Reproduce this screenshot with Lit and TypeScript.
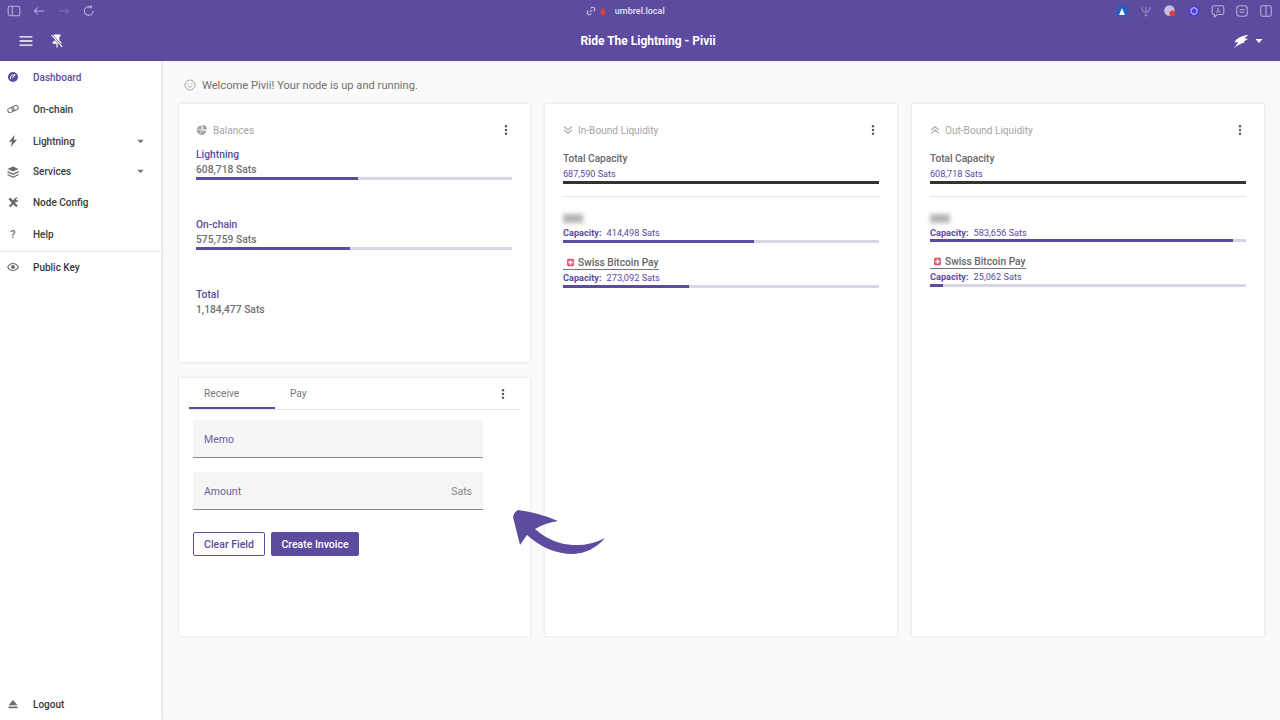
import { LitElement, html, css, svg } from 'lit';
import { customElement } from 'lit/decorators.js';

const ICONS = {
  dashboard: svg`<circle cx="12" cy="12" r="10" fill="currentColor"/><path d="M7.5 15.5a5.5 5.5 0 0 1 8-7M16 7l-4.5 6.5" fill="none" stroke="#fff" stroke-width="2" stroke-linecap="round"/>`,
  link: svg`<g fill="none" stroke="currentColor" stroke-width="2" transform="rotate(-25 12 12)"><rect x="1" y="7.5" width="13" height="9" rx="4.5"/><rect x="10" y="7.5" width="13" height="9" rx="4.5"/></g>`,
  bolt: svg`<path d="M15 0 4 13.500h6L7.500 24 20 9.500h-6.500z" fill="currentColor"/>`,
  layers: svg`<path d="M12 1 1 6l11 5 11-5zM1 10l11 5 11-5v3l-11 5L1 13zM1 16l11 5 11-5v2.500L12 23.500 1 18.500z" fill="currentColor"/>`,
  tools: svg`<path d="M3 6.500 6.500 3l5.500 5.500 5-5.200c1.600-.8 3.300-.4 4.200.4l-3.400 3.300 1 1.600 1.700.6 1.700-1.900c.3 2-.3 3.800-2 4.500-1 .4-1.800.3-2.600.1l-1.700 1.800 5.600 6-3 3-6-5.800-5.700 5.700-3.100-3.100 5.800-5.600z" fill="currentColor"/>`,
  eye: svg`<path d="M1.500 12C4 7 8 5 12 5s8 2 10.500 7C20 17 16 19 12 19S4 17 1.500 12z" fill="none" stroke="currentColor" stroke-width="2.400"/><circle cx="12" cy="12" r="3.800" fill="currentColor"/>`,
  eject: svg`<path d="M12 4 3 14.500h18zM3 17h18v3.500H3z" fill="currentColor"/>`,
  caret: svg`<path d="M5 8h14l-7 8z" fill="currentColor"/>`,
  smile: svg`<g fill="none" stroke="currentColor" stroke-width="1.500"><circle cx="12" cy="12" r="10"/><path d="M7.500 13.500c1.500 3.500 7.500 3.500 9 0M7 10h3M14 10h3"/></g>`,
  pie: svg`<path d="M11 3a9.500 9.500 0 1 0 9.500 10.500H11z" fill="currentColor"/><path d="M13.500 2a9 9 0 0 1 8.500 9h-8.500z" fill="currentColor"/><path d="M3 11h7M8 20l3-7" stroke="#fff" stroke-width="1.300"/>`,
  down: svg`<path d="m3 4 9 8 9-8M3 12l9 8 9-8" fill="none" stroke="currentColor" stroke-width="2.600"/>`,
  up: svg`<path d="m3 12 9-8 9 8M3 20l9-8 9 8" fill="none" stroke="currentColor" stroke-width="2.600"/>`,
  kebab: svg`<g fill="currentColor"><circle cx="12" cy="4.500" r="2.400"/><circle cx="12" cy="12" r="2.400"/><circle cx="12" cy="19.500" r="2.400"/></g>`,
  swiss: svg`<rect x="3" y="2" width="18" height="20" rx="3" fill="#e4526f"/><path d="M10 6h4v4h4v4h-4v4h-4v-4H6v-4h4z" fill="#fff"/>`,
};

function icon(name: keyof typeof ICONS, size: number) {
  return html`<svg class="icon" width=${size} height=${size} viewBox="0 0 24 24">${ICONS[name]}</svg>`;
}

@customElement('app-root')
export class AppRoot extends LitElement {
  static styles = css`
    :host {
      display: block;
      position: relative;
      width: 1280px;
      height: 720px;
      overflow: hidden;
      background: #fafafa;
      font-family: Roboto, 'Liberation Sans', sans-serif;
      font-size: 10.5px;
      color: #5f5f5f;
    }
    .icon { display: block; flex: none; }
    .header { height: 61px; background: #5c4b9f; color: #fff; display: flex; flex-direction: column; }
    .browser { height: 22px; display: grid; grid-template-columns: 1fr auto 1fr; align-items: center; padding: 0 7px; }
    .browser-left { display: flex; gap: 11px; align-items: center; color: #b8b0d8; }
    .browser-left svg { width: 14px; height: 14px; }
    .url { display: flex; align-items: center; gap: 3px; font-size: 9px; font-weight: 500; color: #e4e0f2; margin-right: 29.5px; }
    .url span { margin-left: 5px; }
    .browser-right { display: flex; justify-content: flex-end; gap: 10px; color: #b8b0d8; }
    .browser-right svg { width: 14px; height: 14px; }
    .toolbar { flex: 1; display: grid; grid-template-columns: 161px 974px 1fr; align-items: center; padding-bottom: 1px; }
    .toolbar-left { display: flex; align-items: center; gap: 17px; padding-left: 19px; }
    .title { text-align: center; font-size: 12px; font-weight: 700; }
    .toolbar-right { display: flex; align-items: center; justify-content: flex-end; gap: 4px; color: #fff; padding-right: 15px; }

    .body { display: flex; height: 659px; }
    .side {
      width: 161px;
      flex: none;
      background: #fff;
      box-shadow: 1px 0 3px rgba(0, 0, 0, 0.12);
      display: flex;
      flex-direction: column;
      color: #3a3a3a;
      font-size: 10px;
      font-weight: 500;
      z-index: 1;
    }
    .item { height: 32px; display: flex; align-items: center; padding-left: 7px; gap: 14px; }
    .item.short { height: 29px; }
    .item.key { height: 30px; }
    .item .ico { width: 12px; color: #6a6a6a; display: flex; justify-content: center; font-size: 11px; }
    .item.active { color: #5c4b9f; }
    .item.active .ico { color: #5c4b9f; }
    .item .caret { margin-left: auto; margin-right: 15px; color: #777; }
    .rule { border-top: 1px solid #e6e6e6; margin-top: 1px; }
    .item.logout { margin-top: auto; }

    .main { flex: 1; padding: 15px 16px 0 18px; }
    .welcome { height: 18px; display: flex; align-items: center; gap: 6px; margin: 0 0 10px 5px; font-size: 11.15px; color: #707070; }
    .welcome svg { color: #888; }
    .grid { display: grid; grid-template-columns: 351px 352px 352px; column-gap: 15px; height: 532px; }
    .col { display: flex; flex-direction: column; gap: 16px; }
    .card { background: #fff; box-shadow: 0 0 3px rgba(0, 0, 0, 0.12); }
    .card-head { display: flex; align-items: center; height: 16px; margin-top: 18px; gap: 5px; color: #a5a5a5; font-size: 10.1px; }
    .card-head span { flex: 1; }
    .card-head .kebab { color: #555; }

    .balances { height: 258px; padding: 0 18px 0 17px; font-size: 10.3px; }
    .balances .list { margin-top: 9px; }
    .balance { height: 70px; }
    .balance b { display: block; font-weight: 500; color: #5c4b9f; line-height: 15px; }
    .balance .sats { font-weight: 500; line-height: 15px; color: #707070; }
    .bar { height: 3px; background: #d9d6e6; }
    .bar i { display: block; height: 100%; background: #5c4b9f; }
    .bar.dark { background: #333; }

    .tabs-card { flex: 1; padding: 0 10px; }
    .tabs { display: flex; align-items: stretch; height: 31px; border-bottom: 1px solid #e4e4e4; font-size: 10.2px; }
    .tab { width: 86px; box-sizing: border-box; padding-left: 15px; display: flex; align-items: center; color: #777; }
    .tab.on { border-bottom: 2px solid #5c4b9f; height: 31px; padding-top: 2px; }
    .tab.pay { width: 46px; }
    .tabs .kebab { margin-left: auto; margin-right: 11px; align-self: center; color: #555; }
    .form { padding: 10px 0 0 4px; width: 290px; display: flex; flex-direction: column; gap: 14px; }
    .field {
      height: 37px;
      box-sizing: content-box;
      background: #f6f6f6;
      border-bottom: 1px solid #8a8a8a;
      display: flex;
      align-items: center;
      justify-content: space-between;
      padding: 0 11px;
      color: #6a5fa5;
    }
    .field > * { position: static; }
    .field .label { padding-top: 2px; }
    .field .suffix { color: #888; padding-top: 2px; }
    .buttons { display: flex; gap: 6px; margin-top: 8px; }
    .btn {
      height: 24px;
      display: flex;
      align-items: center;
      justify-content: center;
      box-sizing: border-box;
      border-radius: 2px;
      font-weight: 500;
    }
    .btn.ghost { width: 72px; border: 1px solid #5c4b9f; color: #5c4b9f; background: #fff; }
    .btn.solid { width: 88px; background: #5c4b9f; color: #fff; }

    .liq { padding: 0 18px; }
    .total { margin-top: 13px; font-weight: 500; font-size: 10.1px; color: #666; line-height: 16px; }
    .total-sats { color: #5c4b9f; font-size: 9.1px; line-height: 14px; }
    .liq hr { border: 0; border-top: 1px solid #e4e4e4; margin: 12px 0 0; }
    .peer-name { height: 16px; display: flex; align-items: center; margin-top: 13px; }
    .blurred { width: 20px; height: 9px; background: #b5b5b5; filter: blur(2px); }
    .link { display: inline-flex; align-items: center; gap: 3px; font-size: 10.2px; font-weight: 500; color: #666; border-bottom: 1px solid #777; line-height: 12px; padding-left: 3px; }
    .cap { line-height: 14px; font-size: 9.2px; color: #5c4b9f; }
    .cap b { font-weight: 700; margin-right: 5px; }
    .peer + .peer .peer-name { margin-top: 12px; }
    .out .peer:not(.peer + .peer) .cap { line-height: 13px; }

    .arrow { position: absolute; left: 510px; top: 510px; }
  `;

  private peer(name: unknown, amount: string, pct: number) {
    return html`
      <div class="peer">
        <div class="peer-name">${name}</div>
        <div class="cap"><b>Capacity:</b>${amount}</div>
        <div class="bar"><i style="width:${pct}%"></i></div>
      </div>
    `;
  }

  private swiss() {
    return html`<span class="link">${icon('swiss', 9)} Swiss Bitcoin Pay</span>`;
  }

  private liquidity(cls: string, ic: keyof typeof ICONS, title: string, total: string, a: [string, number], b: [string, number]) {
    return html`
      <div class="card liq ${cls}">
        <div class="card-head">${icon(ic, 10)}<span>${title}</span><div class="kebab">${icon('kebab', 12)}</div></div>
        <div class="total">Total Capacity</div>
        <div class="total-sats">${total}</div>
        <div class="bar dark"></div>
        <hr />
        ${this.peer(html`<div class="blurred"></div>`, a[0], a[1])}
        ${this.peer(this.swiss(), b[0], b[1])}
      </div>
    `;
  }

  render() {
    return html`
      <div class="header">
        <div class="browser">
          <div class="browser-left">
            <svg viewBox="0 0 24 24" fill="none" stroke="currentColor" stroke-width="1.800"><rect x="2" y="4" width="20" height="16" rx="3"/><path d="M9 4v16"/></svg>
            <svg viewBox="0 0 24 24" fill="none" stroke="currentColor" stroke-width="1.800"><path d="M21 12H4M10 6l-6 6 6 6"/></svg>
            <svg viewBox="0 0 24 24" fill="none" stroke="#7d70b5" stroke-width="1.800"><path d="M3 12h17M14 6l6 6-6 6"/></svg>
            <svg viewBox="0 0 24 24" fill="none" stroke="currentColor" stroke-width="1.800"><path d="M19 12a7.500 7.500 0 1 1-3-6M16 2v4.500h-4.500"/></svg>
          </div>
          <div class="url">
            <svg width="10" height="10" viewBox="0 0 24 24" fill="none" stroke="#cfc9e6" stroke-width="2.500"><path d="m9 15 6-6M11 6l2-2a5 5 0 0 1 7 7l-2 2M13 18l-2 2a5 5 0 0 1-7-7l2-2"/></svg>
            <svg width="8" height="9" viewBox="0 0 24 24"><path d="M12 1c2 6 8 8 8 14a8 8 0 0 1-16 0c0-6 6-8 8-14z" fill="#d9433f"/></svg>
            <span>umbrel.local</span>
          </div>
          <div class="browser-right">
            <svg viewBox="0 0 24 24"><rect x="3" y="3" width="18" height="18" rx="3" fill="#1d5fc4"/><path d="M7 19l5-12 5 12z" fill="#fff"/></svg>
            <svg viewBox="0 0 24 24" fill="none" stroke="#8e84bd" stroke-width="2"><path d="M5 5c0 7 3 9 7 9s7-2 7-9M12 5v15M9 20h6"/></svg>
            <svg viewBox="0 0 24 24"><circle cx="11" cy="11" r="9" fill="#c9c0e2"/><circle cx="16" cy="16" r="5" fill="#d9433f"/></svg>
            <svg viewBox="0 0 24 24"><circle cx="12" cy="12" r="10" fill="#4a3fd6"/><path d="M12 6l5 3v6l-5 3-5-3V9z" fill="none" stroke="#b7b2f2" stroke-width="2"/></svg>
            <svg viewBox="0 0 24 24" fill="none" stroke="currentColor" stroke-width="1.800"><path d="M5 3h14a3 3 0 0 1 3 3v9a3 3 0 0 1-3 3h-8l-5 4v-4H5a3 3 0 0 1-3-3V6a3 3 0 0 1 3-3z"/><text x="12" y="15" font-size="11" text-anchor="middle" fill="currentColor" stroke="none" font-family="Roboto">A</text></svg>
            <svg viewBox="0 0 24 24" fill="none" stroke="currentColor" stroke-width="1.800"><rect x="3" y="3" width="18" height="18" rx="5"/><path d="M8 10h8M8 14h8"/></svg>
            <svg viewBox="0 0 24 24" fill="none" stroke="currentColor" stroke-width="1.800"><rect x="3" y="3" width="18" height="18" rx="3"/><path d="M12 3v18"/></svg>
          </div>
        </div>
        <div class="toolbar">
          <div class="toolbar-left">
            <svg class="icon" width="14" height="14" viewBox="0 0 24 24" fill="none" stroke="#fff" stroke-width="2.200"><path d="M1 5h22M1 12h22M1 19h22"/></svg>
            <svg class="icon" width="14" height="14" viewBox="0 0 24 24"><path d="M6 1h12v2.500l-2 1.500v6l3.500 3v2.500H13V23h-2v-6.500H4.500V14L8 11V5L6 3.500z" fill="#fff"/><path d="M3 2l18 20" stroke="#5c4b9f" stroke-width="4"/><path d="M3 2l18 20" stroke="#fff" stroke-width="2"/></svg>
          </div>
          <div class="title">Ride The Lightning - Pivii</div>
          <div class="toolbar-right">
            <svg class="icon" width="16" height="16" viewBox="0 0 24 24"><path d="M1 23 8 14H2C6 7 13 4 23 3l-6 5 6 1c-3 1-5 3-7 4l2 1C12 16 6 19 1 23z" fill="#fff"/></svg>
            <svg class="icon" width="12" height="12" viewBox="0 0 24 24">${ICONS.caret}</svg>
          </div>
        </div>
      </div>
      <div class="body">
        <nav class="side">
          <div class="item active"><div class="ico">${icon('dashboard', 12)}</div>Dashboard</div>
          <div class="item"><div class="ico">${icon('link', 12)}</div>On-chain</div>
          <div class="item"><div class="ico">${icon('bolt', 12)}</div>Lightning<div class="caret">${icon('caret', 11)}</div></div>
          <div class="item short"><div class="ico">${icon('layers', 12)}</div>Services<div class="caret">${icon('caret', 11)}</div></div>
          <div class="item"><div class="ico">${icon('tools', 12)}</div>Node Config</div>
          <div class="item"><div class="ico">?</div>Help</div>
          <div class="rule"></div>
          <div class="item key"><div class="ico">${icon('eye', 12)}</div>Public Key</div>
          <div class="item logout"><div class="ico">${icon('eject', 12)}</div>Logout</div>
        </nav>
        <main class="main">
          <div class="welcome">${icon('smile', 12)}Welcome Pivii! Your node is up and running.</div>
          <div class="grid">
            <div class="col">
              <div class="card balances">
                <div class="card-head">${icon('pie', 12)}<span>Balances</span><div class="kebab">${icon('kebab', 12)}</div></div>
                <div class="list">
                  <div class="balance"><b>Lightning</b><div class="sats">608,718 Sats</div><div class="bar"><i style="width:51.4%"></i></div></div>
                  <div class="balance"><b>On-chain</b><div class="sats">575,759 Sats</div><div class="bar"><i style="width:48.6%"></i></div></div>
                  <div class="balance"><b>Total</b><div class="sats">1,184,477 Sats</div></div>
                </div>
              </div>
              <div class="card tabs-card">
                <div class="tabs">
                  <div class="tab on">Receive</div>
                  <div class="tab pay">Pay</div>
                  <div class="kebab">${icon('kebab', 12)}</div>
                </div>
                <div class="form">
                  <div class="field"><span class="label">Memo</span></div>
                  <div class="field"><span class="label">Amount</span><span class="suffix">Sats</span></div>
                  <div class="buttons">
                    <div class="btn ghost">Clear Field</div>
                    <div class="btn solid">Create Invoice</div>
                  </div>
                </div>
              </div>
            </div>
            ${this.liquidity('in', 'down', 'In-Bound Liquidity', '687,590 Sats', ['414,498 Sats', 60.4], ['273,092 Sats', 39.8])}
            ${this.liquidity('out', 'up', 'Out-Bound Liquidity', '608,718 Sats', ['583,656 Sats', 96], ['25,062 Sats', 4.1])}
          </div>
        </main>
      </div>
      <svg class="arrow" width="100" height="50" viewBox="0 0 100 50">
        <path d="M3 7Q4 2 8 0Q30 3 48 11Q35 13 25 19Q42 34 63 35Q80 36 95 28Q82 43 63 44Q38 44 17 25L10 35Z" fill="#5c4b9f"/>
      </svg>
    `;
  }
}
